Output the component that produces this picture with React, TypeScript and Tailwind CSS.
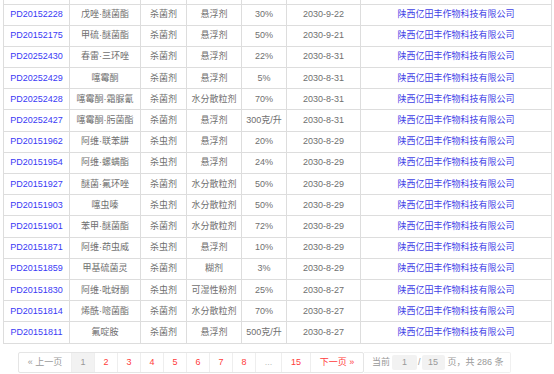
import React from "react";

const rows: [string, string, string, string, string, string][] = [
  ["PD20152228", "戊唑·醚菌酯", "杀菌剂", "悬浮剂", "30%", "2030-9-22"],
  ["PD20152175", "甲硫·醚菌酯", "杀菌剂", "悬浮剂", "50%", "2030-9-21"],
  ["PD20252430", "春雷·三环唑", "杀菌剂", "悬浮剂", "22%", "2030-8-31"],
  ["PD20252429", "噻霉酮", "杀菌剂", "悬浮剂", "5%", "2030-8-31"],
  ["PD20252428", "噻霉酮·霜脲氰", "杀菌剂", "水分散粒剂", "70%", "2030-8-31"],
  ["PD20252427", "噻霉酮·肟菌酯", "杀菌剂", "悬浮剂", "300克/升", "2030-8-31"],
  ["PD20151962", "阿维·联苯肼", "杀虫剂", "悬浮剂", "20%", "2030-8-29"],
  ["PD20151954", "阿维·螺螨酯", "杀虫剂", "悬浮剂", "24%", "2030-8-29"],
  ["PD20151927", "醚菌·氟环唑", "杀菌剂", "水分散粒剂", "50%", "2030-8-29"],
  ["PD20151903", "噻虫嗪", "杀虫剂", "水分散粒剂", "50%", "2030-8-29"],
  ["PD20151901", "苯甲·醚菌酯", "杀菌剂", "水分散粒剂", "72%", "2030-8-29"],
  ["PD20151871", "阿维·茚虫威", "杀虫剂", "悬浮剂", "10%", "2030-8-29"],
  ["PD20151859", "甲基硫菌灵", "杀菌剂", "糊剂", "3%", "2030-8-29"],
  ["PD20151830", "阿维·吡蚜酮", "杀虫剂", "可湿性粉剂", "25%", "2030-8-27"],
  ["PD20151814", "烯酰·嘧菌酯", "杀菌剂", "水分散粒剂", "70%", "2030-8-27"],
  ["PD20151811", "氟啶胺", "杀菌剂", "悬浮剂", "500克/升", "2030-8-27"],
];

const font = {
  fontFamily: '"Liberation Sans", "Noto Sans CJK SC", sans-serif',
};

export default function App() {
  const td = "border border-[#dddddd] p-0 text-center whitespace-nowrap overflow-hidden";
  return (
    <div
      className="w-[554px] h-[374px] overflow-hidden bg-white text-[9px] leading-none text-[#6f6f6f]"
      style={font}
    >
      <table className="ml-[3px] w-[548px] table-fixed border-collapse">
        <colgroup>
          <col className="w-[66px]" />
          <col className="w-[71px]" />
          <col className="w-[46px]" />
          <col className="w-[55px]" />
          <col className="w-[45px]" />
          <col className="w-[74px]" />
          <col className="w-[191px]" />
        </colgroup>
        <tbody>
          <tr className="h-[4px]">
            <td className="border-x border-b border-[#dddddd] p-0" />
            <td className="border-x border-b border-[#dddddd] p-0" />
            <td className="border-x border-b border-[#dddddd] p-0" />
            <td className="border-x border-b border-[#dddddd] p-0" />
            <td className="border-x border-b border-[#dddddd] p-0" />
            <td className="border-x border-b border-[#dddddd] p-0" />
            <td className="border-x border-b border-[#dddddd] p-0" />
          </tr>
          {rows.map((r) => (
            <tr key={r[0]} className="h-[21.2px]">
              <td className={`${td} text-[#3a3af5]`}>{r[0]}</td>
              <td className={td}>{r[1]}</td>
              <td className={td}>{r[2]}</td>
              <td className={td}>{r[3]}</td>
              <td className={td}>{r[4]}</td>
              <td className={td}>{r[5]}</td>
              <td className={`${td} text-[#3f3fe6]`}>陕西亿田丰作物科技有限公司</td>
            </tr>
          ))}
        </tbody>
      </table>

      <div className="mt-[8px] ml-[18px] flex h-[21px] items-stretch">
        <div className="flex items-stretch rounded-[2px] border border-[#e5e5e5]">
          <span className="flex w-[52px] items-center justify-center text-[#999999]">« 上一页</span>
          <span className="flex w-[23px] items-center justify-center border-l border-[#eeeeee] bg-[#f2f2f2] text-[#999999]">1</span>
          {["2", "3", "4", "5", "6", "7", "8"].map((n) => (
            <span key={n} className="flex w-[23px] items-center justify-center border-l border-[#eeeeee] text-[#ff3b3b]">
              {n}
            </span>
          ))}
          <span className="flex w-[26px] items-center justify-center border-l border-[#eeeeee] text-[#bbbbbb]">...</span>
          <span className="flex w-[29px] items-center justify-center border-l border-[#eeeeee] text-[#ff3b3b]">15</span>
          <span className="flex w-[53px] items-center justify-center border-l border-[#eeeeee] text-[#ff3b3b]">下一页 »</span>
        </div>
        <div className="flex items-center rounded-r-[2px] border border-l-0 border-[#f0f0f0] pl-[8px] pr-[6px] text-[#999999]">
          <span>当前</span>
          <span className="ml-[2px] flex h-[15px] w-[25px] items-center justify-center rounded-[2px] bg-[#f2f2f2] text-[#999999]">1</span>
          <span className="mx-[1px]">/</span>
          <span className="flex h-[15px] w-[23px] items-center justify-center rounded-[2px] bg-[#f2f2f2] text-[#999999]">15</span>
          <span className="ml-[3px]">页，共 286 条</span>
        </div>
      </div>
    </div>
  );
}
